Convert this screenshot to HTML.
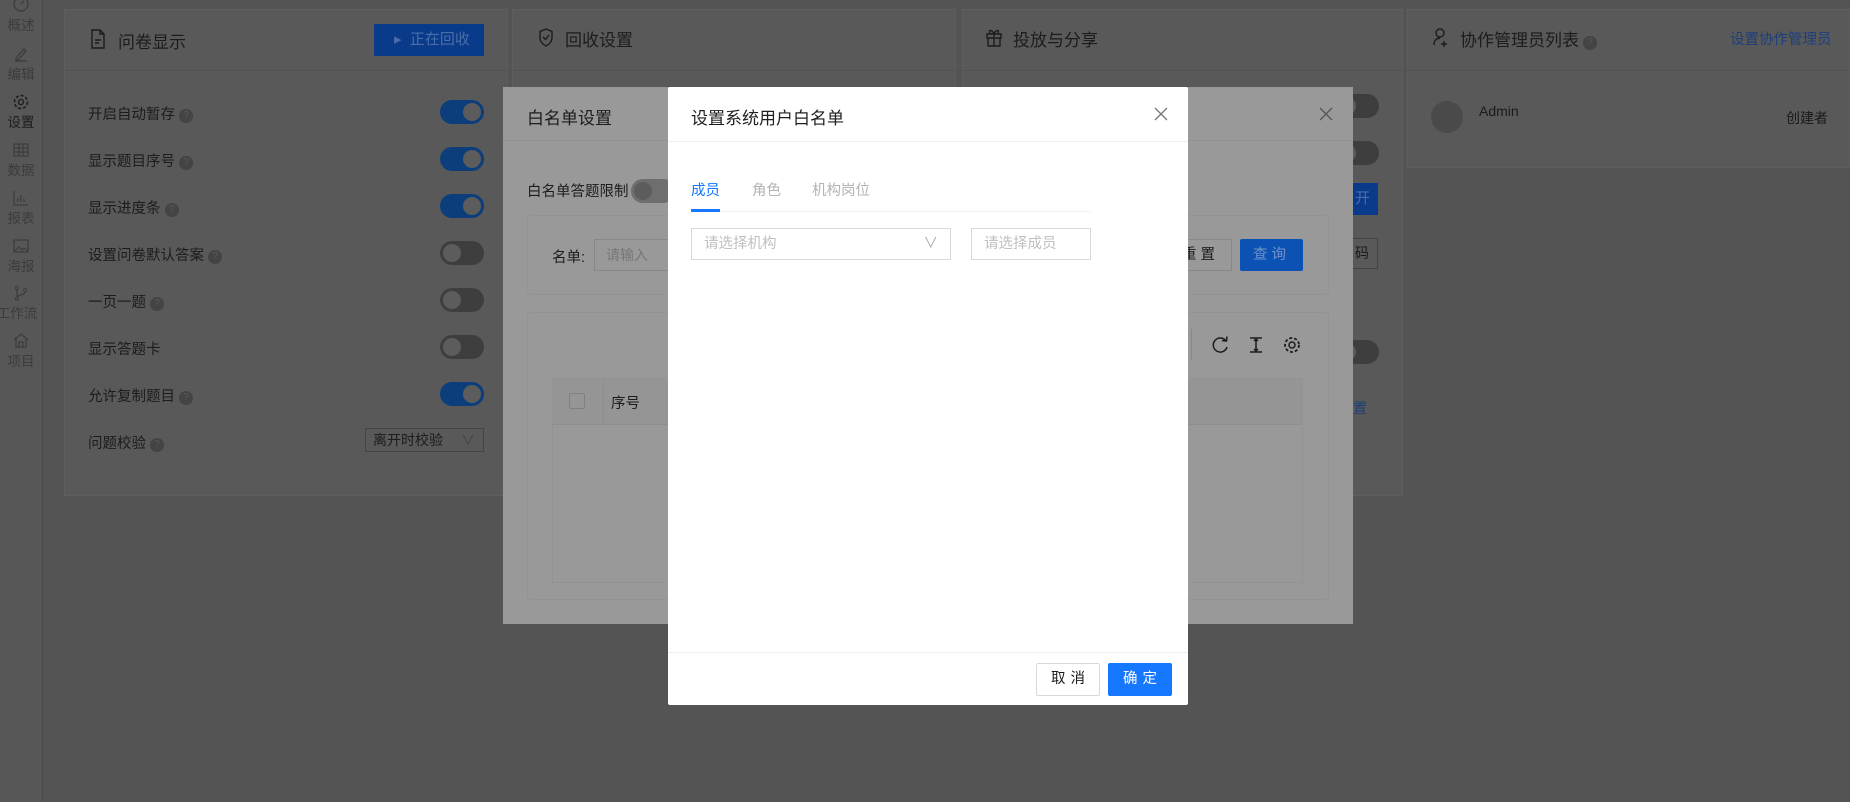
<!DOCTYPE html>
<html><head><meta charset="utf-8"><style>
*{box-sizing:border-box;margin:0;padding:0}
body{width:1850px;height:802px;overflow:hidden;background:#545454;font-family:"Liberation Sans","Noto Sans CJK SC",sans-serif;position:relative;color:#1a1a1a}
.a{position:absolute}
.side{left:0;top:0;width:43px;height:802px;background:#575757;border-right:1px solid #4a4a4a;overflow:hidden}
.sl{position:absolute;left:0;width:42px;text-align:center;font-size:13.5px;color:#3c3c3c;white-space:nowrap}
.side svg{position:absolute;left:13px}
.card{background:#595959;border:1px solid #5e5e5e}
.hd{border-bottom:1px solid #525252}
.t{font-size:17px;color:#1c1c1c}
.lbl{font-size:14.5px;color:#1c1c1c}
.q{display:inline-block;width:14px;height:14px;border-radius:50%;background:#444;color:#5a5a5a;font-size:10px;text-align:center;line-height:14px;vertical-align:1px;margin-left:4px}
.tg{width:44px;height:24px;border-radius:12px;background:#0b3e7a}
.tg::after{content:"";position:absolute;right:3px;top:3px;width:18px;height:18px;border-radius:50%;background:#5c5c5c}
.tg.off{background:#3e3e3e}
.tg.off::after{left:3px;right:auto}
.mid{left:503px;top:87px;width:850px;height:537px;background:#999}
.top{left:668px;top:87px;width:520px;height:618px;background:#fff;border-radius:2px}
</style></head><body>
<div class="a side">
<svg style="top:-4px" width="16" height="16" viewBox="0 0 16 16"><circle cx="8" cy="8" r="7" fill="none" stroke="#3c3c3c" stroke-width="1.3"/><path d="M8 8l3-3" stroke="#3c3c3c" stroke-width="1.3"/></svg>
<div class="sl" style="top:14px">概述</div>
<svg style="top:46px" width="16" height="16" viewBox="0 0 16 16"><path d="M3 12l8-9 2 2-8 9H3z M2 15h12" fill="none" stroke="#3c3c3c" stroke-width="1.3"/></svg>
<div class="sl" style="top:63px">编辑</div>
<svg style="top:94px" width="16" height="16" viewBox="0 0 16 16"><circle cx="8" cy="8" r="2.5" fill="none" stroke="#1c1c1c" stroke-width="1.3"/><circle cx="8" cy="8" r="6.5" fill="none" stroke="#1c1c1c" stroke-width="1.6" stroke-dasharray="3 2"/></svg>
<div class="sl" style="top:111px;color:#1c1c1c">设置</div>
<svg style="top:142px" width="16" height="16" viewBox="0 0 16 16"><path d="M1 2h14v12H1z M1 6h14 M1 10h14 M6 2v12 M10 2v12" fill="none" stroke="#3c3c3c" stroke-width="1.2"/></svg>
<div class="sl" style="top:159px">数据</div>
<svg style="top:190px" width="16" height="16" viewBox="0 0 16 16"><path d="M1 1v14h14 M5 12V8 M8 12V5 M11 12V9" fill="none" stroke="#3c3c3c" stroke-width="1.2"/></svg>
<div class="sl" style="top:207px">报表</div>
<svg style="top:238px" width="16" height="16" viewBox="0 0 16 16"><path d="M1 2h14v12H1z M2 13l4-4 3 3 2-2 4 3" fill="none" stroke="#3c3c3c" stroke-width="1.2"/></svg>
<div class="sl" style="top:255px">海报</div>
<svg style="top:285px" width="16" height="16" viewBox="0 0 16 16"><circle cx="4" cy="3" r="1.5" fill="none" stroke="#3c3c3c"/><circle cx="12" cy="5" r="1.5" fill="none" stroke="#3c3c3c"/><circle cx="4" cy="14" r="1.5" fill="none" stroke="#3c3c3c"/><path d="M4 4.5v8 M12 6.5c0 4-8 3-8 6" fill="none" stroke="#3c3c3c" stroke-width="1.2"/></svg>
<div class="sl" style="top:302px;left:-4px">工作流</div>
<svg style="top:332px" width="16" height="16" viewBox="0 0 16 16"><path d="M1 8l7-6 7 6 M3 6v9h10V6 M6 15v-5h4v5" fill="none" stroke="#3c3c3c" stroke-width="1.2"/></svg>
<div class="sl" style="top:350px">项目</div>
</div>
<!-- card1 -->
<div class="a card" style="left:64px;top:9px;width:444px;height:487px"></div>
<div class="a hd" style="left:64px;top:9px;width:444px;height:62px"></div>
<svg class="a" style="left:90px;top:29px" width="16" height="20" viewBox="0 0 16 20"><path d="M2 1h8l4 4v14H2z M10 1v4h4 M5 11h6 M5 14h4" fill="none" stroke="#1c1c1c" stroke-width="1.4"/></svg>
<div class="a t" style="left:118px;top:28px">问卷显示</div>
<div class="a" style="left:374px;top:24px;width:110px;height:32px;background:#0a3a8a;color:#4a6ea8;font-size:15px;line-height:32px;padding-left:20px">▸ &nbsp;正在回收</div>
<div class="a lbl" style="left:88px;top:103px">开启自动暂存<span class="q">?</span></div>
<div class="a tg" style="left:440px;top:100px"></div>
<div class="a lbl" style="left:88px;top:150px">显示题目序号<span class="q">?</span></div>
<div class="a tg" style="left:440px;top:147px"></div>
<div class="a lbl" style="left:88px;top:197px">显示进度条<span class="q">?</span></div>
<div class="a tg" style="left:440px;top:194px"></div>
<div class="a lbl" style="left:88px;top:244px">设置问卷默认答案<span class="q">?</span></div>
<div class="a tg off" style="left:440px;top:241px"></div>
<div class="a lbl" style="left:88px;top:291px">一页一题<span class="q">?</span></div>
<div class="a tg off" style="left:440px;top:288px"></div>
<div class="a lbl" style="left:88px;top:338px">显示答题卡</div>
<div class="a tg off" style="left:440px;top:335px"></div>
<div class="a lbl" style="left:88px;top:385px">允许复制题目<span class="q">?</span></div>
<div class="a tg" style="left:440px;top:382px"></div>
<div class="a lbl" style="left:88px;top:432px">问题校验<span class="q">?</span></div>
<div class="a" style="left:365px;top:428px;width:119px;height:24px;border:1px solid #444;font-size:14px;line-height:22px;padding-left:7px;color:#1c1c1c">离开时校验<span style="position:absolute;right:8px;color:#444">∨</span></div>
<!-- card2 -->
<div class="a card" style="left:512px;top:9px;width:444px;height:487px"></div>
<div class="a hd" style="left:512px;top:9px;width:444px;height:62px"></div>
<svg class="a" style="left:538px;top:28px" width="16" height="19" viewBox="0 0 16 19"><path d="M8 1l6 2.5v6c0 4-3 7-6 8.5C5 16.5 2 13.5 2 9.5v-6z M5 9l2.5 2.5L11 7" fill="none" stroke="#1c1c1c" stroke-width="1.4"/></svg>
<div class="a t" style="left:565px;top:26px">回收设置</div>
<!-- card3 -->
<div class="a card" style="left:962px;top:9px;width:441px;height:487px"></div>
<div class="a hd" style="left:962px;top:9px;width:441px;height:62px"></div>
<svg class="a" style="left:985px;top:27px" width="18" height="20" viewBox="0 0 18 20"><path d="M2 7h14v4H2z M3 11h12v8H3z M9 7v12 M9 7C7 2 3 3 5 6 M9 7c2-5 6-4 4-1" fill="none" stroke="#1c1c1c" stroke-width="1.4"/></svg>
<div class="a t" style="left:1013px;top:26px">投放与分享</div>
<div class="a tg off" style="left:1335px;top:94px"></div>
<div class="a tg off" style="left:1335px;top:141px"></div>
<div class="a" style="left:1340px;top:183px;width:38px;height:32px;background:#0a3a8a;color:#4a6ea8;font-size:15px;line-height:32px;text-align:right;padding-right:8px">开</div>
<div class="a" style="left:1340px;top:238px;width:38px;height:31px;border:1px solid #444;font-size:14px;line-height:29px;text-align:right;padding-right:8px">码</div>
<div class="a tg off" style="left:1335px;top:340px"></div>
<div class="a" style="left:1353px;top:398px;color:#1b3f7a;font-size:14px">置</div>
<!-- card4 -->
<div class="a card" style="left:1407px;top:9px;width:443px;height:159px"></div>
<div class="a hd" style="left:1407px;top:9px;width:443px;height:62px"></div>
<svg class="a" style="left:1432px;top:27px" width="18" height="20" viewBox="0 0 18 20"><circle cx="8" cy="6" r="4" fill="none" stroke="#1c1c1c" stroke-width="1.4"/><path d="M2 18c0-5 3-7 6-7 M12 14v6 M9 17h6" fill="none" stroke="#1c1c1c" stroke-width="1.4"/></svg>
<div class="a t" style="left:1460px;top:26px">协作管理员列表<span class="q">?</span></div>
<div class="a" style="left:1730px;top:28px;font-size:14.5px;color:#1d3f7c">设置协作管理员</div>
<div class="a" style="left:1431px;top:101px;width:32px;height:32px;border-radius:50%;background:#4a4a4a"></div>
<div class="a" style="left:1479px;top:103px;font-size:14px">Admin</div>
<div class="a" style="left:1786px;top:108px;font-size:14px">创建者</div>
<!-- middle dialog -->
<div class="a mid"></div>
<div class="a" style="left:503px;top:140px;width:850px;height:1px;background:#929292"></div>
<div class="a t" style="left:527px;top:104px">白名单设置</div>
<svg class="a" style="left:1319px;top:107px" width="14" height="14" viewBox="0 0 14 14"><path d="M1 1l12 12M13 1L1 13" stroke="#555" stroke-width="1.3"/></svg>
<div class="a lbl" style="left:527px;top:180px">白名单答题限制</div>
<div class="a tg off" style="left:631px;top:179px;background:#6e6e6e"></div>
<div class="a" style="left:527px;top:215px;width:802px;height:80px;border:1px solid #939393;border-radius:3px"></div>
<div class="a lbl" style="left:552px;top:246px">名单:</div>
<div class="a" style="left:594px;top:239px;width:100px;height:32px;border:1px solid #888;font-size:14px;line-height:30px;padding-left:11px;color:#777">请输入</div>
<div class="a" style="left:1160px;top:239px;width:72px;height:32px;border:1px solid #888;font-size:14.5px;line-height:30px;text-align:right;padding-right:12px;letter-spacing:4px">重置</div>
<div class="a" style="left:1240px;top:239px;width:63px;height:32px;background:#0b52b4;border-radius:2px;color:#6f93c8;font-size:14.5px;line-height:32px;text-align:center;letter-spacing:4px">查询</div>
<div class="a" style="left:527px;top:312px;width:802px;height:288px;border:1px solid #939393;border-radius:3px"></div>
<div class="a" style="left:1191px;top:329px;width:1px;height:31px;background:#888"></div>
<svg class="a" style="left:1210px;top:335px" width="100" height="20" viewBox="0 0 100 20"><path d="M16 6A7 7 0 1 0 17 12" fill="none" stroke="#1c1c1c" stroke-width="1.5"/><path d="M12 5.5l4.5 0.5 0.5-4.5" fill="none" stroke="#1c1c1c" stroke-width="1.5"/><path d="M40 3h12M40 17h12M46 3v14M44 6l2-2 2 2M44 14l2 2 2-2" fill="none" stroke="#1c1c1c" stroke-width="1.5"/><circle cx="82" cy="10" r="3" fill="none" stroke="#1c1c1c" stroke-width="1.5"/><circle cx="82" cy="10" r="7" fill="none" stroke="#1c1c1c" stroke-width="1.8" stroke-dasharray="3 2"/></svg>
<div class="a" style="left:552px;top:378px;width:751px;height:205px;border:1px solid #939393"></div>
<div class="a" style="left:553px;top:379px;width:749px;height:46px;background:#959595;border-bottom:1px solid #8e8e8e"></div>
<div class="a" style="left:603px;top:379px;width:1px;height:46px;background:#8e8e8e"></div>
<div class="a" style="left:569px;top:393px;width:16px;height:16px;border:1px solid #808080;border-radius:2px"></div>
<div class="a lbl" style="left:611px;top:392px">序号</div>
<!-- top dialog -->
<div class="a top"></div>
<div class="a" style="left:668px;top:141px;width:520px;height:1px;background:#efefef"></div>
<div class="a" style="left:691px;top:104px;font-size:17px;color:#1f1f1f">设置系统用户白名单</div>
<svg class="a" style="left:1154px;top:107px" width="14" height="14" viewBox="0 0 14 14"><path d="M1 1l12 12M13 1L1 13" stroke="#777" stroke-width="1.3"/></svg>
<div class="a" style="left:691px;top:179px;font-size:14.5px;color:#1677ff">成员</div>
<div class="a" style="left:752px;top:179px;font-size:14.5px;color:#b3b3b3">角色</div>
<div class="a" style="left:812px;top:179px;font-size:14.5px;color:#b3b3b3">机构岗位</div>
<div class="a" style="left:691px;top:211px;width:400px;height:1px;background:#f0f0f0"></div>
<div class="a" style="left:691px;top:209px;width:29px;height:3px;background:#1677ff"></div>
<div class="a" style="left:691px;top:228px;width:260px;height:32px;border:1px solid #d9d9d9;font-size:14.5px;line-height:30px;padding-left:12px;color:#bfbfbf">请选择机构<span style="position:absolute;right:12px;color:#aaa">∨</span></div>
<div class="a" style="left:971px;top:228px;width:120px;height:32px;border:1px solid #d9d9d9;font-size:14.5px;line-height:30px;padding-left:12px;color:#bfbfbf">请选择成员</div>
<div class="a" style="left:668px;top:652px;width:520px;height:1px;background:#efefef"></div>
<div class="a" style="left:1036px;top:663px;width:64px;height:33px;border:1px solid #d9d9d9;border-radius:2px;font-size:14.5px;line-height:31px;text-align:center;letter-spacing:5px;padding-left:5px">取消</div>
<div class="a" style="left:1108px;top:663px;width:64px;height:33px;background:#1677ff;border-radius:2px;color:#fff;font-size:14.5px;line-height:33px;text-align:center;letter-spacing:5px;padding-left:5px">确定</div>
</body></html>
